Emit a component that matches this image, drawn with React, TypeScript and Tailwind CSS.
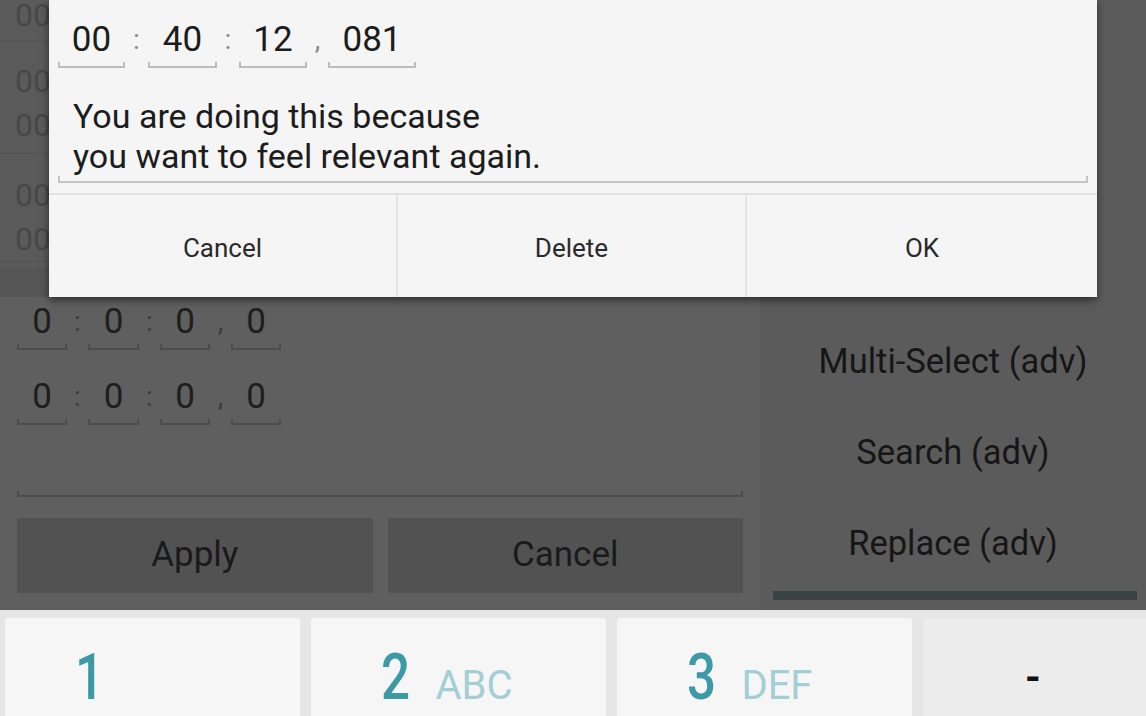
const Underline = ({ tone, h }: { tone: string; h?: string }) => (
  <div className={`${h ?? "h-[6px]"} border-x-2 border-b-2 ${tone}`} />
);

const TimeField = ({ value, width, light }: { value: string; width: string; light?: boolean }) => (
  <div className={`flex flex-col ${width}`}>
    <div className={`text-center text-[35px] leading-[44px] ${light ? "text-[#1c1c1c]" : "text-[#1e1e1e]"}`}>{value}</div>
    <Underline tone={light ? "border-[#bdbdbd]" : "border-[#4d4d4d]"} />
  </div>
);

const Sep = ({ ch, width, light }: { ch: string; width: string; light?: boolean }) => (
  <div className={`${width} text-center text-[28px] leading-[44px] ${light ? "text-[#8a8a8a]" : "text-[#3c3c3c]"}`}>{ch}</div>
);

const ListRow = ({ lines, h, pt }: { lines: string[]; h: string; pt: string }) => (
  <div className={`${h} ${pt} flex flex-col gap-[2px] border-b border-[#545454] pl-[15px]`}>
    {lines.map((l, i) => (
      <div key={i} className="text-[32px] leading-[42px] text-[#474747]">{l}</div>
    ))}
  </div>
);

const ZeroRow = () => (
  <div className="flex">
    <TimeField value="0" width="w-[50px]" />
    <Sep ch=":" width="w-[21px]" />
    <TimeField value="0" width="w-[51px]" />
    <Sep ch=":" width="w-[21px]" />
    <TimeField value="0" width="w-[50px]" />
    <Sep ch="," width="w-[21px]" />
    <TimeField value="0" width="w-[50px]" />
  </div>
);

const Key = ({ digit, letters }: { digit: string; letters?: string }) => (
  <div className="w-[295px] h-[110px] shrink-0 rounded-[3px] bg-[#f6f6f6] flex items-start pt-[28px] pl-[70px]">
    <div className="flex items-baseline gap-[24px]">
      <span className="inline-block origin-left scale-x-[0.8] text-[64px] leading-[64px] font-medium text-[#3c99a6]">{digit}</span>
      {letters && <span className="text-[40px] leading-[40px] text-[#a3ced4] -ml-[6px]">{letters}</span>}
    </div>
  </div>
);

export default function App() {
  return (
    <div className="relative w-[1146px] h-[716px] overflow-hidden bg-[#5c5c5c] font-['Roboto',sans-serif]">
      <div className="flex h-[610px]">
        {/* left panel */}
        <div className="w-[760px] flex flex-col bg-[#5f5f5f]">
          <div className="h-[268px] bg-[#5a5a5a] flex flex-col">
            <ListRow lines={["00"]} h="h-[47px]" pt="-mt-[6px] pt-0" />
            <ListRow lines={["00", "00"]} h="h-[113px]" pt="pt-[19px]" />
            <ListRow lines={["00", "00"]} h="h-[108px]" pt="pt-[20px]" />
          </div>
          <div className="h-[29px] bg-[#565656]" />
          <div className="flex flex-col px-[17px] pt-[3px]">
            <ZeroRow />
            <div className="mt-[25px]">
              <ZeroRow />
            </div>
            <div className="mt-[66px] w-[726px]">
              <Underline tone="border-[#4d4d4d]" />
            </div>
            <div className="mt-[21px] flex gap-[15px]">
              <div className="w-[356px] h-[75px] bg-[#525252] rounded-[2px] flex items-center justify-center text-[35px] text-[#1a1a1a]">Apply</div>
              <div className="w-[356px] h-[75px] bg-[#525252] rounded-[2px] flex items-center justify-center text-[35px] text-[#1a1a1a]">Cancel</div>
            </div>
          </div>
        </div>
        {/* right panel */}
        <div className="flex-1 flex flex-col bg-[#5b5b5b] pt-[316px]">
          <div className="h-[91px] flex items-center justify-center text-[34.5px] text-[#161616]">Multi-Select (adv)</div>
          <div className="h-[91px] flex items-center justify-center text-[34.5px] text-[#161616]">Search (adv)</div>
          <div className="h-[91px] flex items-center justify-center text-[34.5px] text-[#161616]">Replace (adv)</div>
          <div className="mt-[2px] ml-[13px] mr-[9px] h-[9px] bg-[#394242]" />
        </div>
      </div>

      {/* keyboard */}
      <div className="h-[106px] bg-[#e6e6e6] flex gap-[11px] pl-[5px] pt-[8px]">
        <Key digit="1" />
        <Key digit="2" letters="ABC" />
        <Key digit="3" letters="DEF" />
        <div className="w-[295px] h-[110px] shrink-0 rounded-[3px] bg-[#ececec] pl-[102px] pt-[40px] text-[40px] leading-[40px] font-bold text-[#111]">-</div>
      </div>

      {/* dialog */}
      <div className="absolute left-[49px] top-0 w-[1048px] h-[297px] bg-[#f5f5f5] shadow-[0_3px_8px_rgba(0,0,0,0.55)] flex flex-col">
        <div className="flex pl-[9px] pt-[18px]">
          <TimeField value="00" width="w-[67px]" light />
          <Sep ch=":" width="w-[23px]" light />
          <TimeField value="40" width="w-[69px]" light />
          <Sep ch=":" width="w-[22px]" light />
          <TimeField value="12" width="w-[68px]" light />
          <Sep ch="," width="w-[21px]" light />
          <TimeField value="081" width="w-[88px]" light />
        </div>
        <div className="mt-[28px] ml-[9px] w-[1030px]">
          <div className="pl-[15px] text-[34px] leading-[40px] text-[#1c1c1c]">
            You are doing this because
            <br />
            you want to feel relevant again.
          </div>
          <Underline tone="border-[#c4c4c4]" h="h-[7px]" />
        </div>
        <div className="mt-[10px] flex-1 flex border-t-2 border-[#e2e2e2]">
          <div className="w-[349px] flex items-center justify-center pt-[4px] text-[26px] text-[#2a2a2a] border-r-2 border-[#e4e4e4]">Cancel</div>
          <div className="w-[349px] flex items-center justify-center pt-[4px] text-[26px] text-[#2a2a2a] border-r-2 border-[#e4e4e4]">Delete</div>
          <div className="flex-1 flex items-center justify-center pt-[4px] text-[26px] text-[#2a2a2a]">OK</div>
        </div>
      </div>
    </div>
  );
}
